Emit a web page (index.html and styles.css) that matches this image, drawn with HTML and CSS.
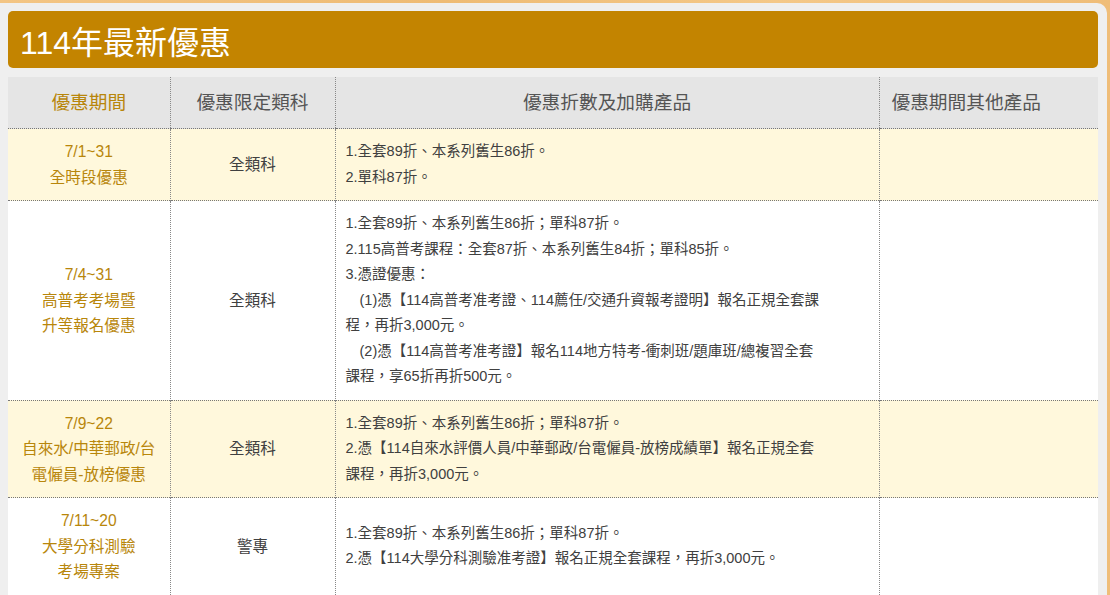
FILE: index.html
```html
<!DOCTYPE html>
<html lang="zh-Hant">
<head>
<meta charset="utf-8">
<title>114年最新優惠</title>
<link rel="stylesheet" href="styles.css">
</head>
<body>
<div class="panel">
  <h1 class="banner">114年最新優惠</h1>
  <table class="promo">
    <colgroup>
      <col class="c-period">
      <col class="c-scope">
      <col class="c-detail">
      <col class="c-other">
    </colgroup>
    <thead>
      <tr>
        <th class="gold">優惠期間</th>
        <th>優惠限定類科</th>
        <th>優惠折數及加購產品</th>
        <th class="other">優惠期間其他產品</th>
      </tr>
    </thead>
    <tbody>
      <tr class="alt">
        <td class="period">7/1~31<br>全時段優惠</td>
        <td class="scope">全類科</td>
        <td class="detail">
          <div>1.全套89折、本系列舊生86折。</div>
          <div>2.單科87折。</div>
        </td>
        <td></td>
      </tr>
      <tr>
        <td class="period">7/4~31<br>高普考考場暨<br>升等報名優惠</td>
        <td class="scope">全類科</td>
        <td class="detail">
          <div>1.全套89折、本系列舊生86折；單科87折。</div>
          <div>2.115高普考課程：全套87折、本系列舊生84折；單科85折。</div>
          <div>3.憑證優惠：</div>
          <div class="sub">(1)憑【114高普考准考證、114薦任/交通升資報考證明】報名正規全套課<br>程，再折3,000元。</div>
          <div class="sub">(2)憑【114高普考准考證】報名114地方特考-衝刺班/題庫班/總複習全套<br>課程，享65折再折500元。</div>
        </td>
        <td></td>
      </tr>
      <tr class="alt">
        <td class="period">7/9~22<br>自來水/中華郵政/台<br>電僱員-放榜優惠</td>
        <td class="scope">全類科</td>
        <td class="detail">
          <div>1.全套89折、本系列舊生86折；單科87折。</div>
          <div>2.憑【114自來水評價人員/中華郵政/台電僱員-放榜成績單】報名正規全套<br>課程，再折3,000元。</div>
        </td>
        <td></td>
      </tr>
      <tr>
        <td class="period">7/11~20<br>大學分科測驗<br>考場專案</td>
        <td class="scope">警專</td>
        <td class="detail">
          <div>1.全套89折、本系列舊生86折；單科87折。</div>
          <div>2.憑【114大學分科測驗准考證】報名正規全套課程，再折3,000元。</div>
        </td>
        <td></td>
      </tr>
    </tbody>
  </table>
</div>
</body>
</html>
```
FILE: styles.css
```css
html, body {
  margin: 0;
  padding: 0;
}
body {
  background: #f1c07c;
  background-image: linear-gradient(90deg, #f3c584 0%, #eebb74 40%, #f4c888 70%, #efbd78 100%);
  font-family: "Liberation Sans", "Noto Sans CJK TC", sans-serif;
  overflow: hidden;
  height: 595px;
}
.panel {
  margin-top: 3px;
  width: 1107px;
  box-sizing: border-box;
  padding: 8px 9px 0 8px;
  background: #efefef;
  border-radius: 0 10px 0 0;
  min-height: 592px;
}
.banner {
  margin: 0;
  height: 57px;
  box-sizing: border-box;
  padding: 0 12px;
  display: flex;
  align-items: center;
  background: #c38400;
  border-radius: 5px;
  color: #ffffff;
  font-size: 32px;
  font-weight: normal;
}
.promo {
  margin-top: 9px;
  width: 1090px;
  table-layout: fixed;
  border-collapse: collapse;
  background: #ffffff;
  font-size: 14.5px;
  line-height: 25.5px;
  color: #404040;
}
.c-period { width: 162px; }
.c-scope { width: 165px; }
.c-detail { width: 544px; }
.c-other { width: 219px; }
.promo th {
  height: 51px;
  padding: 0;
  background: #e5e5e5;
  font-size: 18.7px;
  font-weight: normal;
  color: #555555;
  border-left: 1px dotted #888888;
  border-bottom: 1px dotted #777777;
}
.promo th.other {
  padding-right: 45px;
}
.promo th:first-child,
.promo td:first-child {
  border-left: none;
}
.promo th.gold {
  color: #b8860b;
}
.promo td {
  padding: 10px 10px;
  vertical-align: middle;
  border-left: 1px dotted #888888;
  border-top: 1px dotted #777777;
}
.promo tr.alt td {
  background: #fff8dc;
}
.promo td.period {
  text-align: center;
  color: #b8860b;
  font-size: 15.6px;
}
.promo td.scope {
  text-align: center;
  font-size: 15.6px;
}
.promo td.detail {
  text-align: left;
  padding-right: 4px;
}
.promo .sub {
  text-indent: 14px;
}
```
